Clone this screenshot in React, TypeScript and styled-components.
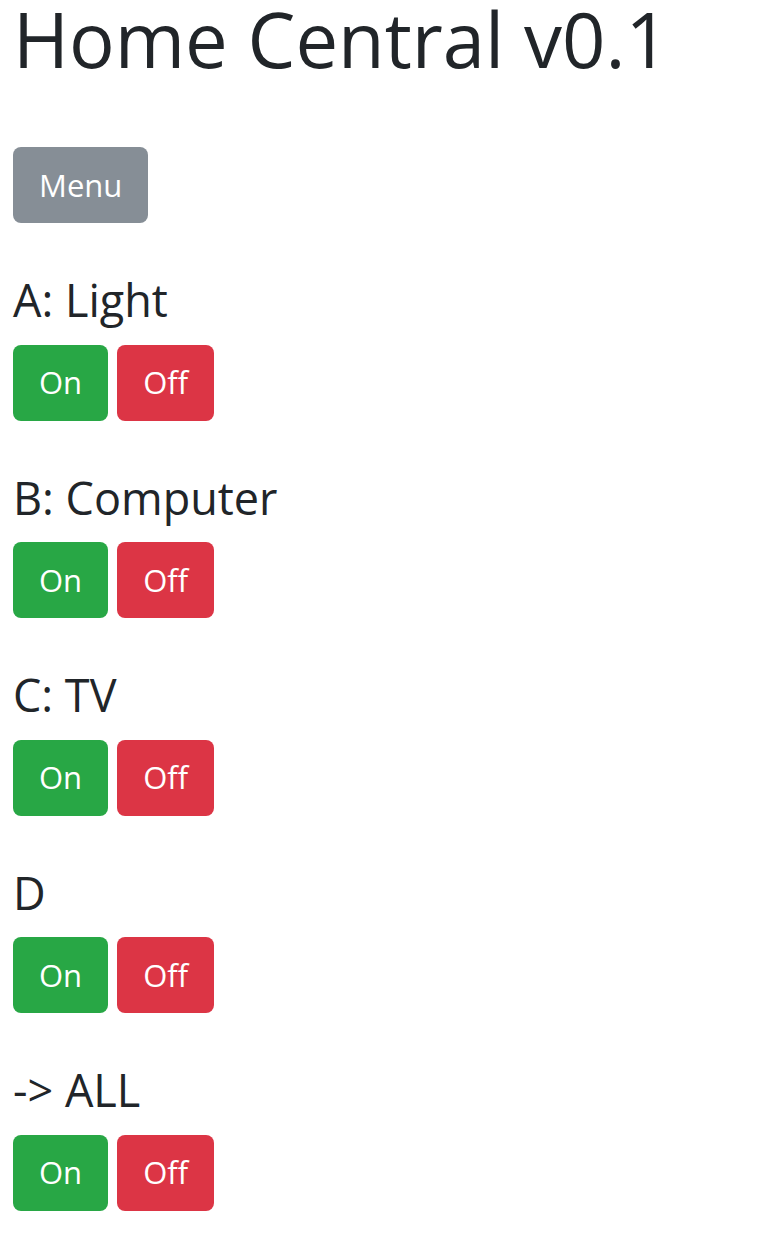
import React from 'react';
import styled, { createGlobalStyle } from 'styled-components';

const GlobalStyle = createGlobalStyle`
  body {
    margin: 0;
    background: #ffffff;
    color: #212529;
    font-family: "Open Sans", "Noto Sans", sans-serif;
  }
`

const Page = styled.div`
  display: flex;
  flex-direction: column;
  align-items: flex-start;
  padding: 0 13px;
`

const Title = styled.h1`
  margin: 0;
  font-size: 76px;
  line-height: 77px;
  font-weight: 400;
`

const Button = styled.button<{ $bg: string }>`
  height: 76px;
  padding: 0 26px;
  border: none;
  border-radius: 8px;
  background-color: ${(p) => p.$bg};
  color: #ffffff;
  font-family: inherit;
  font-size: 31px;
  line-height: 1;
`

const MenuButton = styled(Button)`
  margin-top: 70px;
`

const Section = styled.section`
  margin-top: 48px;
  display: flex;
  flex-direction: column;
`

const Heading = styled.h4`
  margin: 0 0 16px;
  font-size: 45px;
  line-height: 57.6px;
  font-weight: 400;
`

const ButtonRow = styled.div`
  display: flex;
  gap: 9px;
`

const devices = ['A: Light', 'B: Computer', 'C: TV', 'D', '-> ALL'];

export default function App() {
  return (
    <>
      <GlobalStyle />
      <Page>
        <Title>Home Central v0.1</Title>
        <MenuButton $bg="#868e96">Menu</MenuButton>
        {devices.map((name) => (
          <Section key={name}>
            <Heading>{name}</Heading>
            <ButtonRow>
              <Button $bg="#28a745">On</Button>
              <Button $bg="#dc3545">Off</Button>
            </ButtonRow>
          </Section>
        ))}
      </Page>
    </>
  );
}
